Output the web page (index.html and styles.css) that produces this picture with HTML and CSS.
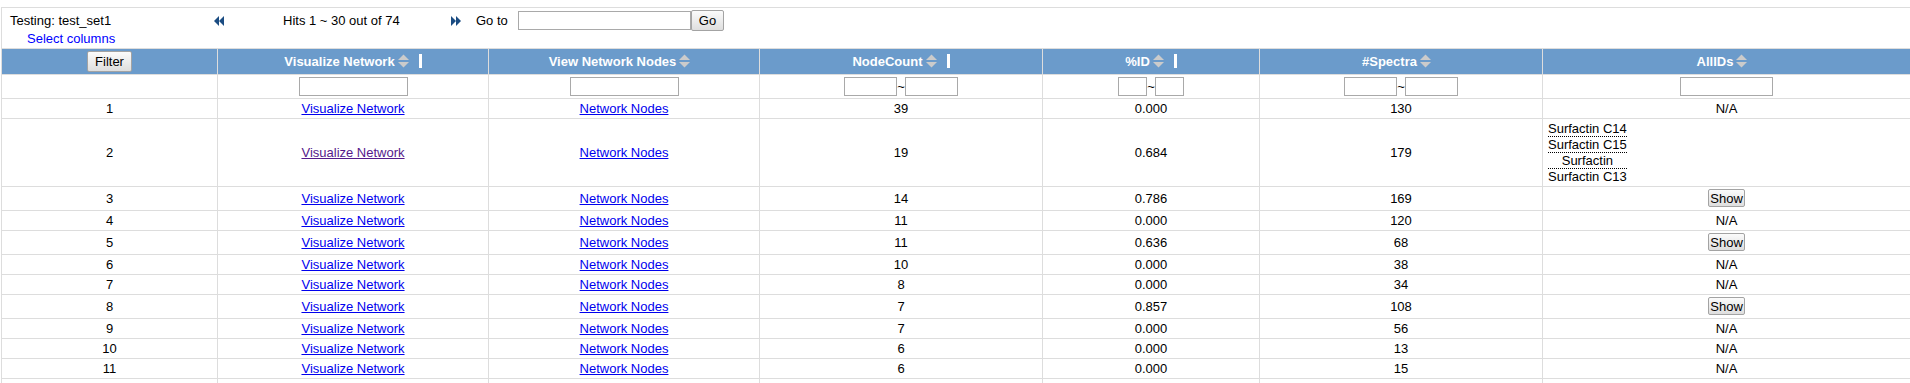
FILE: index.html
```html
<!DOCTYPE html>
<html>
<head>
<meta charset="utf-8">
<title>Results</title>
<link rel="stylesheet" href="styles.css">
</head>
<body>
<div class="page">
<table class="grid">
  <colgroup>
    <col class="c0"><col class="c1"><col class="c2"><col class="c3"><col class="c4"><col class="c5"><col class="c6">
  </colgroup>
  <tr>
    <td class="toolbar" colspan="7">
      <div class="bar-line">
        <span class="title">Testing: test_set1</span>
        <svg class="pg-icon" width="10" height="10" viewBox="0 0 10 10"><polygon points="5,0 0,5 5,10"/><polygon points="10,0 5,5 10,10"/></svg>
        <span class="hits">Hits 1 ~ 30 out of 74</span>
        <svg class="pg-icon" width="10" height="10" viewBox="0 0 10 10"><polygon points="0,0 5,5 0,10"/><polygon points="5,0 10,5 5,10"/></svg>
        <span class="goto">Go to</span>
        <input class="page-input" type="text">
        <button class="btn btn-go">Go</button>
      </div>
      <div class="select-line"><a class="select-cols" href="#">Select columns</a></div>
    </td>
  </tr>
  <tr class="head">
    <th><button class="btn btn-filter">Filter</button></th>
    <th>Visualize Network<svg class="sort" width="11" height="14" viewBox="0 0 11 14"><polygon points="0,6 5.5,0.5 11,6"/><polygon points="0,8 11,8 5.5,13.5"/></svg><span class="rbar"></span></th>
    <th>View Network Nodes<svg class="sort" width="11" height="14" viewBox="0 0 11 14"><polygon points="0,6 5.5,0.5 11,6"/><polygon points="0,8 11,8 5.5,13.5"/></svg><span class="pad"></span></th>
    <th>NodeCount<svg class="sort" width="11" height="14" viewBox="0 0 11 14"><polygon points="0,6 5.5,0.5 11,6"/><polygon points="0,8 11,8 5.5,13.5"/></svg><span class="rbar"></span></th>
    <th>%ID<svg class="sort" width="11" height="14" viewBox="0 0 11 14"><polygon points="0,6 5.5,0.5 11,6"/><polygon points="0,8 11,8 5.5,13.5"/></svg><span class="rbar"></span></th>
    <th>#Spectra<svg class="sort" width="11" height="14" viewBox="0 0 11 14"><polygon points="0,6 5.5,0.5 11,6"/><polygon points="0,8 11,8 5.5,13.5"/></svg><span class="pad"></span></th>
    <th>AllIDs<svg class="sort" width="11" height="14" viewBox="0 0 11 14"><polygon points="0,6 5.5,0.5 11,6"/><polygon points="0,8 11,8 5.5,13.5"/></svg><span class="pad"></span></th>
  </tr>
  <tr class="filters">
    <td><div class="f"></div></td>
    <td><div class="f"><input class="in-wide" type="text"></div></td>
    <td><div class="f"><input class="in-wide" type="text"></div></td>
    <td><div class="f"><input class="in-range" type="text">~<input class="in-range" type="text"></div></td>
    <td><div class="f"><input class="in-small" type="text">~<input class="in-small" type="text"></div></td>
    <td><div class="f"><input class="in-range" type="text">~<input class="in-range" type="text"></div></td>
    <td><div class="f"><input class="in-ids" type="text"></div></td>
  </tr>
  <tr>
    <td>1</td><td><a href="#">Visualize Network</a></td><td><a href="#">Network Nodes</a></td><td>39</td><td>0.000</td><td>130</td><td>N/A</td>
  </tr>
  <tr>
    <td>2</td><td><a class="visited" href="#">Visualize Network</a></td><td><a href="#">Network Nodes</a></td><td>19</td><td>0.684</td><td>179</td>
    <td class="ids"><div class="id-list"><div class="id">Surfactin C14</div><div class="id">Surfactin C15</div><div class="id">Surfactin</div><div class="id last">Surfactin C13</div></div></td>
  </tr>
  <tr>
    <td>3</td><td><a href="#">Visualize Network</a></td><td><a href="#">Network Nodes</a></td><td>14</td><td>0.786</td><td>169</td><td><button class="btn btn-show">Show</button></td>
  </tr>
  <tr>
    <td>4</td><td><a href="#">Visualize Network</a></td><td><a href="#">Network Nodes</a></td><td>11</td><td>0.000</td><td>120</td><td>N/A</td>
  </tr>
  <tr>
    <td>5</td><td><a href="#">Visualize Network</a></td><td><a href="#">Network Nodes</a></td><td>11</td><td>0.636</td><td>68</td><td><button class="btn btn-show">Show</button></td>
  </tr>
  <tr>
    <td>6</td><td><a href="#">Visualize Network</a></td><td><a href="#">Network Nodes</a></td><td>10</td><td>0.000</td><td>38</td><td>N/A</td>
  </tr>
  <tr>
    <td>7</td><td><a href="#">Visualize Network</a></td><td><a href="#">Network Nodes</a></td><td>8</td><td>0.000</td><td>34</td><td>N/A</td>
  </tr>
  <tr>
    <td>8</td><td><a href="#">Visualize Network</a></td><td><a href="#">Network Nodes</a></td><td>7</td><td>0.857</td><td>108</td><td><button class="btn btn-show">Show</button></td>
  </tr>
  <tr>
    <td>9</td><td><a href="#">Visualize Network</a></td><td><a href="#">Network Nodes</a></td><td>7</td><td>0.000</td><td>56</td><td>N/A</td>
  </tr>
  <tr>
    <td>10</td><td><a href="#">Visualize Network</a></td><td><a href="#">Network Nodes</a></td><td>6</td><td>0.000</td><td>13</td><td>N/A</td>
  </tr>
  <tr>
    <td>11</td><td><a href="#">Visualize Network</a></td><td><a href="#">Network Nodes</a></td><td>6</td><td>0.000</td><td>15</td><td>N/A</td>
  </tr>
  <tr class="empty">
    <td></td><td></td><td></td><td></td><td></td><td></td><td></td>
  </tr>
</table>
</div>
</body>
</html>
```

FILE: styles.css
```css
html, body {
  margin: 0;
  padding: 0;
  overflow: hidden;
  background: #fff;
}
body {
  font-family: "Liberation Sans", Arial, sans-serif;
  font-size: 13px;
  color: #000;
}
.page {
  padding-top: 7px;
  padding-left: 1px;
}
.grid {
  border-collapse: separate;
  border-spacing: 0;
  table-layout: fixed;
  width: 1910px;
  border-left: 1px solid #dddddd;
  border-top: 1px solid #dddddd;
}
.c0 { width: 216px; }
.c1 { width: 271px; }
.c2 { width: 271px; }
.c3 { width: 283px; }
.c4 { width: 217px; }
.c5 { width: 283px; }
.c6 { width: 368px; }

.grid td, .grid th {
  border-right: 1px solid #dddddd;
  border-bottom: 1px solid #dddddd;
  padding: 2px 5px;
  text-align: center;
  vertical-align: middle;
  line-height: 15px;
  font-size: 13px;
  white-space: nowrap;
}
.empty td {
  height: 15px;
}

/* toolbar */
.grid td.toolbar {
  text-align: left;
  padding: 2px 0 2px 8px;
}
.bar-line {
  display: flex;
  align-items: center;
  height: 21px;
}
.title {
  width: 204px;
  flex: none;
}
.pg-icon {
  flex: none;
  fill: #1b4c82;
}
.hits {
  width: 227px;
  padding-left: 59px;
  box-sizing: border-box;
  flex: none;
}
.goto {
  width: 42px;
  padding-left: 15px;
  flex: none;
}
.page-input {
  width: 173px;
  height: 19px;
  box-sizing: border-box;
  border: 1px solid #a9a9a9;
  margin: 0;
  padding: 1px 2px;
  font: 13px "Liberation Sans", Arial, sans-serif;
}
.select-line {
  padding-left: 17px;
  line-height: 15px;
}
.grid a.select-cols {
  color: #0000ff;
  text-decoration: none;
}

/* buttons */
.btn {
  font: 13px "Liberation Sans", Arial, sans-serif;
  color: #000;
  background: linear-gradient(#fbfbfb, #dedede);
  border: 1px solid #a3a3a3;
  border-radius: 2px;
  margin: 0;
  padding: 0 6px;
  box-sizing: border-box;
}
.btn-go {
  width: 33px;
  height: 21px;
  padding: 0;
}
.btn-filter {
  width: 45px;
  height: 21px;
  padding: 0;
  vertical-align: top;
}
.btn-show {
  width: 37px;
  height: 18px;
  padding: 0;
  line-height: 15px;
  vertical-align: top;
  margin-bottom: 1px;
}

/* header */
.head th {
  background: #6b9bcb;
  color: #fff;
  font-weight: bold;
}
.sort {
  display: inline-block;
  margin-left: 3px;
  vertical-align: -2px;
  fill: #cbcbcb;
}
.rbar {
  display: inline-block;
  width: 3px;
  height: 14px;
  margin-left: 10px;
  background: #fff;
  vertical-align: -2px;
}
.pad {
  display: inline-block;
  width: 9px;
}

/* filter row */
.f {
  display: flex;
  justify-content: center;
  align-items: center;
  height: 19px;
}
.f input {
  height: 19px;
  box-sizing: border-box;
  border: 1px solid #a9a9a9;
  margin: 0;
  padding: 1px 2px;
  font: 13px "Liberation Sans", Arial, sans-serif;
}
.in-wide { width: 109px; }
.in-range { width: 53px; }
.in-small { width: 29px; }
.in-ids { width: 93px; }

/* links */
.grid a {
  color: #0000ee;
  text-decoration: underline;
}
.grid a.visited {
  color: #551a8b;
}

/* ids */
.grid td.ids {
  text-align: left;
}
.id-list {
  display: table;
}
.id {
  text-align: center;
  line-height: 15px;
  border-bottom: 1px dotted #000;
}
.id.last {
  border-bottom: none;
}
```
